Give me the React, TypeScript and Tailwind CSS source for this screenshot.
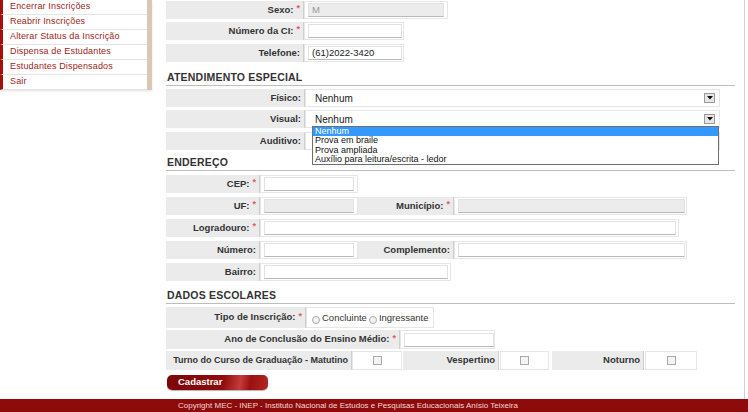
import React from "react";

const Star = () => <span className="text-[#e05a5a] text-[9px] ml-[3px] relative top-[-1px]">*</span>;

function Label({ w, text, req, className = "" }: { w: number; text: string; req?: boolean; className?: string }) {
  return (
    <div
      className={"h-full bg-[#ebebeb] border-r border-[#cfcfcf] flex items-center justify-end pr-[3px] font-bold text-[#333] whitespace-nowrap " + (className || "text-[9.5px]")}
      style={{ width: w }}
    >
      {text}
      {req && <Star />}
    </div>
  );
}

function InputCell({ w, iw, gray, value }: { w: number; iw: number; gray?: boolean; value?: string }) {
  return (
    <div className="h-full bg-white border border-[#e6e6e6] flex items-center pl-[3px]" style={{ width: w }}>
      <div
        className={
          "h-[14px] border border-[#e2e2e2] border-b-[#b9b9b9] flex items-center pl-[3px] text-[9.5px] " +
          (gray ? "bg-[#ececec] text-[#999]" : "bg-white text-[#222]")
        }
        style={{ width: iw }}
      >
        {value}
      </div>
    </div>
  );
}

function Arrow() {
  return (
    <div className="w-[11px] h-[10px] bg-[#e6e6e6] border border-[#9a9a9a] flex items-center justify-center">
      <svg width="6" height="4" viewBox="0 0 6 4">
        <path d="M0 0 L6 0 L3 3.5 Z" fill="#111" />
      </svg>
    </div>
  );
}

function SelectCell({ value }: { value: string }) {
  return (
    <div className="h-full w-[415px] bg-white border border-[#e6e6e6] flex items-center pl-[4px] pr-[1px]">
      <div className="flex-1 h-[15px] flex items-center justify-between pl-[5px] pr-[3px] text-[10px] text-[#222]">
        <span>{value}</span>
        <Arrow />
      </div>
    </div>
  );
}

function Header({ text, h, mt }: { text: string; h: number; mt: number }) {
  return (
    <div
      className="w-[569px] flex items-end pb-[2px] border-b border-[#bdbdbd] text-[10.5px] font-bold text-[#333] leading-[12px] pl-[1px] tracking-[0.2px]"
      style={{ height: h, marginTop: mt }}
    >
      {text}
    </div>
  );
}

function Check() {
  return <div className="w-[9px] h-[9px] border border-[#a9a9a9] bg-[#f4f4f4]" />;
}

function CheckCell({ w }: { w: number }) {
  return (
    <div className="h-full bg-white border border-[#e6e6e6] flex items-center justify-center" style={{ width: w }}>
      <Check />
    </div>
  );
}

function Radio() {
  return <span className="inline-block w-[8px] h-[8px] rounded-full border border-[#aaa] bg-[#f2f2f2] mr-[2px] relative top-[-1px]" />;
}

const menu = [
  "Encerrar Inscrições",
  "Reabrir Inscrições",
  "Alterar Status da Inscrição",
  "Dispensa de Estudantes",
  "Estudantes Dispensados",
  "Sair",
];

export default function App() {
  return (
    <div className="w-[748px] h-[412px] bg-white flex flex-col overflow-hidden" style={{ fontFamily: "'Liberation Sans', Arial, sans-serif" }}>
      <div className="flex flex-1 border-r border-[#cfcfcf] w-[745px]">
        {/* sidebar */}
        <div className="w-[152px] shrink-0">
          <div className="flex shadow-[0_1px_2px_rgba(0,0,0,0.12)]">
            <div className="w-[147px]">
              {menu.map((m) => (
                <div
                  key={m}
                  className="h-[15px] border-l-[3px] border-[#a80d0d] border-b border-b-[#e3e3e3] flex items-center pl-[7px] text-[9px] text-[#9a2525] tracking-[0.15px]"
                >
                  {m}
                </div>
              ))}
            </div>
            <div className="w-[5px] bg-[#dcc6b6]" />
          </div>
        </div>

        {/* main */}
        <div className="pl-[14px] flex flex-col relative">
          <div className="flex h-[18px] mt-[1px]">
            <Label w={138} text="Sexo:" req />
            <InputCell w={144} iw={136} gray value="M" />
          </div>
          <div className="flex h-[18px] mt-[3px]">
            <Label w={138} text="Número da CI:" req />
            <InputCell w={100} iw={94} />
          </div>
          <div className="flex h-[18px] mt-[4px]">
            <Label w={138} text="Telefone:" />
            <InputCell w={100} iw={94} value="(61)2022-3420" />
          </div>

          <Header text="ATENDIMENTO ESPECIAL" h={24} mt={0} />
          <div className="flex h-[18px] mt-[3px]">
            <Label w={139} text="Físico:" />
            <SelectCell value="Nenhum" />
          </div>
          <div className="flex h-[18px] mt-[3px]">
            <Label w={139} text="Visual:" />
            <SelectCell value="Nenhum" />
          </div>
          <div className="flex h-[18px] mt-[4px]">
            <Label w={139} text="Auditivo:" />
            <SelectCell value="" />
          </div>

          {/* open dropdown */}
          <div className="absolute left-[160px] top-[126px] w-[407px] h-[39px] bg-white border border-[#6f6f6f] text-[9px] leading-[9.3px] text-[#111] z-10">
            <div className="bg-[#3399ff] text-white pl-[2px]">Nenhum</div>
            <div className="pl-[2px]">Prova em braile</div>
            <div className="pl-[2px]">Prova ampliada</div>
            <div className="pl-[2px]">Auxílio para leitura/escrita - ledor</div>
          </div>

          <Header text="ENDEREÇO" h={21} mt={0} />
          <div className="flex h-[18px] mt-[4px]">
            <Label w={94} text="CEP:" req />
            <InputCell w={98} iw={90} />
          </div>
          <div className="flex h-[18px] mt-[4px]">
            <Label w={94} text="UF:" req />
            <InputCell w={98} iw={90} gray />
            <Label w={96} text="Município:" req />
            <InputCell w={233} iw={227} gray />
          </div>
          <div className="flex h-[18px] mt-[4px]">
            <Label w={94} text="Logradouro:" req />
            <InputCell w={419} iw={412} />
          </div>
          <div className="flex h-[18px] mt-[4px]">
            <Label w={94} text="Número:" />
            <InputCell w={98} iw={90} />
            <Label w={96} text="Complemento:" />
            <InputCell w={233} iw={227} />
          </div>
          <div className="flex h-[18px] mt-[4px]">
            <Label w={94} text="Bairro:" />
            <InputCell w={191} iw={184} />
          </div>

          <Header text="DADOS ESCOLARES" h={23} mt={0} />
          <div className="flex h-[21px] mt-[3px]">
            <Label w={140} text="Tipo de Inscrição:" req />
            <div className="h-full w-[128px] bg-white border border-[#e6e6e6] flex items-end pb-[2px] pl-[5px] text-[9.5px] text-[#333] whitespace-nowrap">
              <Radio />
              Concluinte
              <span className="ml-[2px]" />
              <Radio />
              Ingressante
            </div>
          </div>
          <div className="flex h-[19px] mt-[2px]">
            <Label w={234} text="Ano de Conclusão do Ensino Médio:" req />
            <InputCell w={95} iw={90} />
          </div>
          <div className="flex h-[19px] mt-[2px]">
            <Label w={186} text="Turno do Curso de Graduação - Matutino" className="text-[9px]" />
            <CheckCell w={50} />
            <div className="w-[1px]" />
            <Label w={96} text="Vespertino" />
            <div className="w-[1px]" />
            <CheckCell w={49} />
            <div className="w-[3px]" />
            <Label w={92} text="Noturno" />
            <div className="w-[1px]" />
            <CheckCell w={52} />
          </div>

          <div className="mt-[5px] ml-[1px] w-[101px] h-[15px] rounded-[5px] bg-[linear-gradient(100deg,#7d0606_0%,#8e0b0b_55%,#c53a3a_72%,#9a1010_82%,#b52525_100%)] shadow-[0_1px_1px_rgba(0,0,0,0.3)] flex items-center pl-[11px] text-[9.5px] font-bold text-white">
            Cadastrar
          </div>
        </div>
      </div>

      <div className="h-[13px] bg-[#8e0b0b] flex items-center pl-[178px] text-[8px] text-[#f2d6d6] whitespace-nowrap">
        Copyright MEC - INEP - Instituto Nacional de Estudos e Pesquisas Educacionais Anísio Teixeira
      </div>
    </div>
  );
}
